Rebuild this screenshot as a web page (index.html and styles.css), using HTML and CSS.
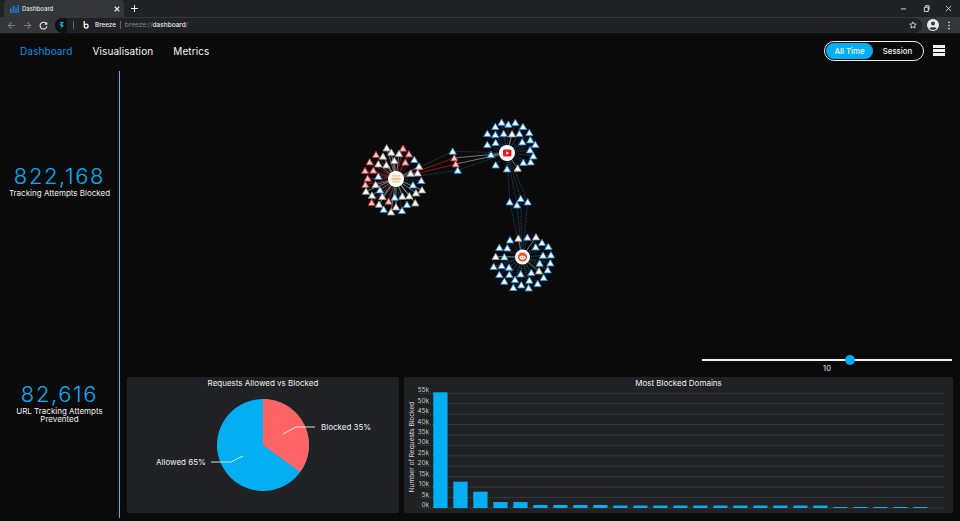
FILE: index.html
```html
<!DOCTYPE html>
<html lang="en">
<head>
<meta charset="utf-8">
<title>Dashboard</title>
<link rel="stylesheet" href="styles.css">
</head>
<body>
<div class="app">
  <header class="chrome">
    <div class="tabstrip">
      <div class="tab">
        <svg class="favicon" viewBox="0 0 10 10" width="9" height="9"><path d="M0 10V5h2v5zM3 10V2h2v8zM6 10V4h1.500v6zM8.300 10V1H10v9z" fill="#1f78c8"/></svg>
        <span class="tab-title">Dashboard</span>
        <svg class="tab-close" viewBox="0 0 8 8" width="6" height="6"><path d="M1 1l6 6M7 1L1 7" stroke="#e8eaed" stroke-width="1.500"/></svg>
      </div>
      <svg class="new-tab" viewBox="0 0 8 8" width="7" height="7"><path d="M4 0v8M0 4h8" stroke="#e8eaed" stroke-width="1.200"/></svg>
      <div class="win-controls">
        <svg viewBox="0 0 8 8" width="7" height="7"><path d="M1 4.500h6" stroke="#e8eaed"/></svg>
        <svg viewBox="0 0 8 8" width="7" height="7"><path d="M1.500 2.500h4.500v5h-4.500zM3 2.500V.800h4v4.500H6" fill="none" stroke="#e8eaed"/></svg>
        <svg viewBox="0 0 8 8" width="7" height="7"><path d="M1 1l6 6M7 1L1 7" stroke="#e8eaed" stroke-width=".9"/></svg>
      </div>
    </div>
    <div class="toolbar">
      <svg class="tb-icon" viewBox="0 0 10 10" width="9" height="9"><path d="M9 5H2M5 1.500L1.500 5 5 8.500" fill="none" stroke="#7a7c80" stroke-width="1.200"/></svg>
      <svg class="tb-icon" viewBox="0 0 10 10" width="9" height="9"><path d="M1 5h7M5 1.500L8.500 5 5 8.500" fill="none" stroke="#7a7c80" stroke-width="1.200"/></svg>
      <svg class="tb-icon" viewBox="0 0 10 10" width="9" height="9"><path d="M8.300 3.200A3.800 3.800 0 1 0 8.800 5.800" fill="none" stroke="#e8eaed" stroke-width="1.200"/><path d="M9.200.800v3.300H5.900z" fill="#e8eaed"/></svg>
      <div class="omnibox">
        <span class="shield"><svg viewBox="0 0 8 10" width="7" height="9"><path d="M1 1h6L4.500 3.600 6.500 5 3.500 9 4 5.800 1.800 4.500 4 2.800z" fill="#12b5e8"/></svg></span>
        <span class="sep sep-a"></span>
        <svg class="breeze-logo" viewBox="0 0 8 11" width="6" height="8"><path d="M1.500 0v7M1.500 7a2.700 2.700 0 1 0 5.400 0a2.700 2.700 0 1 0-5.400 0" fill="none" stroke="#fff" stroke-width="1.700"/></svg>
        <span class="site-name">Breeze</span>
        <span class="sep sep-b"></span>
        <span class="url"><span class="url-dim">breeze://</span>dashboard<span class="url-dim">/</span></span>
        <svg class="star" viewBox="0 0 10 10" width="8" height="8"><path d="M5 1l1.200 2.700 2.900.3-2.200 1.900.7 2.900L5 7.300 2.400 8.800l.7-2.900L.9 4l2.900-.3z" fill="none" stroke="#e8eaed"/></svg>
      </div>
      <svg class="avatar" viewBox="0 0 12 12" width="12" height="12"><circle cx="6" cy="6" r="6" fill="#e8eaed"/><circle cx="6" cy="4.500" r="2" fill="#35363a"/><path d="M2.300 9.500C3 7.800 9 7.800 9.700 9.500 8 11.200 4 11.200 2.300 9.500z" fill="#35363a"/></svg>
      <svg class="kebab" viewBox="0 0 2 10" width="2" height="9"><circle cx="1" cy="1.500" r=".9" fill="#e8eaed"/><circle cx="1" cy="5" r=".9" fill="#e8eaed"/><circle cx="1" cy="8.500" r=".9" fill="#e8eaed"/></svg>
    </div>
  </header>

  <div class="page">
    <nav class="topnav">
      <a class="nav-link is-active">Dashboard</a>
      <a class="nav-link">Visualisation</a>
      <a class="nav-link">Metrics</a>
      <div class="toggle">
        <span class="toggle-opt is-on">All Time</span>
        <span class="toggle-opt">Session</span>
      </div>
      <div class="hamburger"><i></i><i></i><i></i></div>
    </nav>

    <div class="content">
      <aside class="sidebar">
        <div class="stat">
          <div class="stat-num">822,168</div>
          <div class="stat-label">Tracking Attempts Blocked</div>
        </div>
        <div class="stat">
          <div class="stat-num">82,616</div>
          <div class="stat-label">URL Tracking Attempts Prevented</div>
        </div>
      </aside>

      <main class="main">
        <section class="graph-area">
          <svg id="graph" class="graph" viewBox="120 71 840 282" width="840" height="282"></svg>
        </section>
        <div class="slider-row">
          <div class="slider">
            <div class="slider-track"><span class="slider-thumb"></span></div>
            <div class="slider-value">10</div>
          </div>
        </div>
        <section class="panels">
          <div class="panel panel-pie">
            <div class="panel-title">Requests Allowed vs Blocked</div>
            <svg class="pie" viewBox="127 387 272 126" width="272" height="126">
              <circle cx="263" cy="445" r="46" fill="#03aef2"/>
              <path d="M263 445V399A46 46 0 0 1 300.200 472z" fill="#ff6464"/>
              <path d="M283 434l13-7h19M243 456l-12 6h-20" fill="none" stroke="#f0f0f0" stroke-width=".9"/>
              <text class="pie-label" x="321" y="430">Blocked 35%</text>
              <text class="pie-label" x="156" y="465">Allowed 65%</text>
            </svg>
          </div>
          <div class="panel panel-bars">
            <div class="panel-title">Most Blocked Domains</div>
            <svg id="bars" class="bars" viewBox="404 387 549 126" width="549" height="126"></svg>
          </div>
        </section>
      </main>
    </div>
  </div>
</div>
<script src="charts.js"></script>
</body>
</html>
```
FILE: styles.css
```css
* { box-sizing: border-box; }
html, body { margin: 0; height: 100%; }
body { background: #0a0a0a; color: #f0f0f0; font-family: "Inter", "Liberation Sans", sans-serif; overflow: hidden; }
.app { width: 960px; height: 521px; display: flex; flex-direction: column; }

.chrome { flex: none; height: 35px; background: #0e0e10; }
.tabstrip { height: 17px; background: #202124; display: flex; align-items: center; padding-left: 4px; }
.tab { width: 120px; height: 17px; background: #35363a; border-radius: 4px 4px 0 0; display: flex; align-items: center; padding: 0 4px 0 6px; }
.favicon { flex: none; }
.tab-title { flex: 1; margin-left: 3px; font-size: 6px; font-weight: 500; color: #dfe1e5; }
.new-tab { margin-left: 7px; }
.win-controls { margin-left: auto; width: 52px; margin-right: 8px; display: flex; justify-content: space-between; }
.toolbar { height: 16px; background: #35363a; display: flex; align-items: center; padding-left: 7px; }
.tb-icon { flex: none; margin-right: 7px; }
.omnibox { width: 867px; height: 15px; background: #202124; border-radius: 8px; margin-left: 0; margin-right: -2px; display: flex; align-items: center; }
.shield { width: 12px; height: 15px; background: #111; border-radius: 8px 3px 3px 8px; display: flex; align-items: center; justify-content: center; }
.sep { width: 1px; height: 8px; background: #5f6368; }
.sep-a { margin-left: 6px; }
.breeze-logo { margin-left: 9px; }
.site-name { margin-left: 6px; font-size: 6.300px; font-weight: 500; color: #e8eaed; }
.sep-b { margin-left: 4px; }
.url { margin-left: 4px; font-size: 6.500px; font-weight: 500; color: #e8eaed; }
.url-dim { color: #80868b; font-weight: 400; }
.star { margin-left: auto; margin-right: 5px; }
.avatar { flex: none; margin-left: 7px; }
.kebab { flex: none; margin-left: 9px; }

.page { flex: 1; min-height: 0; background: #0a0a0a; display: flex; flex-direction: column; }
.topnav { flex: none; height: 36px; padding: 0 15px 5px 20px; display: flex; align-items: center; gap: 20px; }
.nav-link { font-size: 10px; font-weight: 400; letter-spacing: .1px; color: #f6f6f6; }
.nav-link.is-active { color: #0d8fe6; }
.toggle { margin-left: auto; width: 100px; height: 20px; border: 1.500px solid #f0f0f0; border-radius: 10px; padding: 1px; display: flex; align-items: stretch; }
.toggle-opt { font-size: 7.800px; font-weight: 500; display: flex; align-items: center; justify-content: center; flex: 1; color: #f8f8f8; border-radius: 8px; }
.toggle-opt.is-on { flex: none; width: 47px; background: #03aef2; }
.hamburger { width: 12px; margin-left: -11px; display: flex; flex-direction: column; gap: 1.500px; }
.hamburger i { display: block; height: 2.500px; background: #f0f0f0; }

.content { flex: 1; min-height: 0; display: flex; padding-bottom: 3px; }
.sidebar { flex: none; width: 120px; border-right: 1px solid #29c5ea; display: flex; flex-direction: column; justify-content: space-around; padding: 0 8px 2px; text-align: center; }
.stat-num { font-size: 22px; line-height: 24px; font-weight: 300; letter-spacing: 1.600px; color: #03aef2; }
.stat-label { margin-top: 1px; font-size: 8px; line-height: 8px; font-weight: 400; color: #f0f0f0; }

.main { flex: 1; min-width: 0; display: flex; flex-direction: column; }
.graph-area { flex: none; height: 282px; }
.graph { display: block; }
.slider-row { flex: none; height: 24px; display: flex; justify-content: flex-end; padding-right: 8px; }
.slider { width: 250px; padding-top: 6px; }
.slider-track { height: 2px; background: #f0f0f0; position: relative; }
.slider-thumb { position: absolute; left: 143px; top: -4px; width: 10px; height: 10px; border-radius: 50%; background: #03aef2; }
.slider-value { margin-top: 3px; text-align: center; font-size: 7.500px; line-height: 9px; color: #e6e6e6; }

.panels { flex: none; height: 136px; display: flex; gap: 5px; padding-left: 7px; margin-bottom: 5px; }
.panel { background: #202124; border-radius: 2px; height: 136px; }
.panel-pie { width: 272px; }
.panel-bars { width: 549px; }
.panel-title { height: 10px; padding-top: 1px; text-align: center; font-size: 8px; line-height: 10px; color: #f0f0f0; }
.pie, .bars { display: block; }
.pie-label { font-family: "Inter", "Liberation Sans", sans-serif; font-size: 8px; fill: #f0f0f0; }
.axis-label { font-family: "Inter", "Liberation Sans", sans-serif; font-size: 6.400px; fill: #c8c8c8; }
.axis-title { font-family: "Inter", "Liberation Sans", sans-serif; font-size: 6.600px; fill: #d8d8d8; }
```
FILE: charts.js
```js
var NS = "http://www.w3.org/2000/svg";
function el(parent, name, attrs, text) {
  var n = document.createElementNS(NS, name);
  for (var k in attrs) n.setAttribute(k, attrs[k]);
  if (text) n.textContent = text;
  parent.appendChild(n);
  return n;
}

/* Network graph. Leaf positions are page pixels read as [x, y]. */
function zoom3(list, ox, oy) {
  return list.map(function (p) { return [ox + p[0] / 3, oy + p[1] / 3]; });
}
var hubs = { red: [396, 179], yt: [507, 153], rd: [522, 257] };
var groups = [
  { hub: hubs.red, kind: "red", pts: zoom3([[159,115],[78,134],[177,132],[59,156],[166,157],[45,182],[70,181],[53,205],[46,224],[65,278],[116,274]], 350, 110) },
  { hub: hubs.red, kind: "white", pts: zoom3([[110,114],[124,127],[147,131],[99,139],[133,152],[85,162],[109,165],[207,169],[182,190],[203,189],[48,244],[77,224],[66,256],[97,260],[157,259],[178,258],[198,249],[216,240],[196,279],[87,283],[138,291],[123,306]], 350, 110) },
  { hub: hubs.red, kind: "blue", pts: zoom3([[193,149],[85,199],[214,212],[189,225],[90,240],[134,262],[171,284],[101,298],[156,302]], 350, 110) },
  { hub: hubs.yt, kind: "blue", pts: zoom3([[455,37],[475,43],[496,38],[519,50],[436,50],[412,71],[436,74],[461,71],[508,71],[538,68],[412,104],[437,98],[517,96],[541,90],[556,104],[540,120],[550,138],[542,156],[520,158],[437,165],[471,177],[423,134]], 350, 110) },
  { hub: hubs.yt, kind: "white", pts: zoom3([[486,72],[503,175]], 350, 110) },
  { hub: hubs.rd, kind: "blue", pts: zoom3([[90,150],[142,142],[186,158],[205,170],[167,171],[58,173],[82,174],[73,201],[189,196],[213,195],[179,220],[211,219],[41,230],[65,227],[87,232],[203,240],[58,254],[88,254],[122,252],[154,248],[191,263],[105,269],[148,271],[73,274],[173,281],[124,285],[146,294],[100,293]], 480, 190) },
  { hub: hubs.rd, kind: "white", pts: zoom3([[115,145],[168,141],[47,200],[177,243]], 480, 190) }
];
var bridges = [
  { a: hubs.red, b: hubs.yt, kind: "blue", p: [452.7, 151.3] },
  { a: hubs.red, b: hubs.yt, kind: "red", p: [454.3, 158] },
  { a: hubs.red, b: hubs.yt, kind: "red", p: [455.7, 164] },
  { a: hubs.red, b: hubs.yt, kind: "blue", p: [457.7, 170.3] },
  { a: hubs.yt, b: hubs.rd, kind: "blue", p: [509.7, 202] },
  { a: hubs.yt, b: hubs.rd, kind: "blue", p: [520.7, 198.7] },
  { a: hubs.yt, b: hubs.rd, kind: "blue", p: [517, 205] },
  { a: hubs.yt, b: hubs.rd, kind: "blue", p: [527.7, 202] }
];
var edgeStyle = {
  red: { stroke: "#8e1419", w: 1, dash: "" },
  white: { stroke: "#a8a8a8", w: .7, dash: "" },
  blue: { stroke: "#24608a", w: .7, dash: "1.2 1" }
};
var triStyle = {
  red: { fill: "#d4d4d4", stroke: "#d8222a" },
  white: { fill: "#ffffff", stroke: "#9a9a9a" },
  blue: { fill: "#ffffff", stroke: "#1f8fe6" }
};
var g = document.getElementById("graph");
function edge(a, b, kind) {
  var s = edgeStyle[kind];
  el(g, "line", { x1: a[0], y1: a[1], x2: b[0], y2: b[1], stroke: s.stroke, "stroke-width": s.w, "stroke-dasharray": s.dash });
}
function tri(p, kind) {
  var s = triStyle[kind], x = p[0], y = p[1];
  el(g, "polygon", {
    points: x + "," + (y - 3.4) + " " + (x + 3.6) + "," + (y + 2.9) + " " + (x - 3.6) + "," + (y + 2.9),
    fill: s.fill, stroke: s.stroke, "stroke-width": .9, "stroke-linejoin": "round"
  });
}
groups.forEach(function (gr) { gr.pts.forEach(function (p) { edge(gr.hub, p, gr.kind); }); });
bridges.forEach(function (b) { edge(b.a, b.p, b.kind); edge(b.p, b.b, b.kind === "red" ? "white" : b.kind); });
groups.forEach(function (gr) { gr.pts.forEach(function (p) { tri(p, gr.kind); }); });
bridges.forEach(function (b) { tri(b.p, b.kind); });

/* Hubs */
el(g, "circle", { cx: 396, cy: 179, r: 8, fill: "#fff" });
el(g, "rect", { x: 392, y: 174.800, width: 8, height: 2.200, rx: 1, fill: "#fbd3ad" });
el(g, "rect", { x: 391, y: 177.800, width: 10, height: 2.200, rx: 1, fill: "#f9c08c" });
el(g, "rect", { x: 392, y: 180.800, width: 8, height: 2.200, rx: 1, fill: "#fbd3ad" });
el(g, "circle", { cx: 507, cy: 153, r: 8, fill: "#fff" });
el(g, "rect", { x: 503, y: 149.500, width: 8.500, height: 7, rx: 1.500, fill: "#e01b1b" });
el(g, "path", { d: "M506.200 151.300l2.800 1.700-2.800 1.700z", fill: "#fff" });
el(g, "circle", { cx: 522.500, cy: 257, r: 7.500, fill: "#fff" });
el(g, "circle", { cx: 522.500, cy: 257, r: 4.600, fill: "#f0501e" });
el(g, "ellipse", { cx: 522.500, cy: 257.600, rx: 3, ry: 2, fill: "#fff" });
el(g, "circle", { cx: 521.300, cy: 257.300, r: .6, fill: "#f0501e" });
el(g, "circle", { cx: 523.700, cy: 257.300, r: .6, fill: "#f0501e" });

/* Bar chart */
var b = document.getElementById("bars");
var heights = [115.700, 26.300, 16.300, 6, 6, 3, 3, 3, 3, 2.500, 2.500, 2.500, 2.500, 2.500, 2.500, 2.500, 2.500, 2.500, 2.500, 2.500, 1, 1, 1, 1, 1];
var base = 508;
for (var i = 0; i < 12; i++) {
  var y = base - i * 10.430;
  el(b, "line", { x1: 420, y1: y, x2: 943, y2: y, stroke: "#58595c", "stroke-width": .8, "stroke-dasharray": "1 1" });
  el(b, "text", { "class": "axis-label", x: 429, y: y - 1, "text-anchor": "end" }, (i * 5) + "k");
}
heights.forEach(function (h, i) {
  el(b, "rect", { x: 433.300 + 20 * i, y: base - h, width: 14.300, height: h, fill: "#03aef2" });
});
el(b, "text", { "class": "axis-title", transform: "translate(413.500 447) rotate(-90)", "text-anchor": "middle" }, "Number of Requests Blocked");
```
